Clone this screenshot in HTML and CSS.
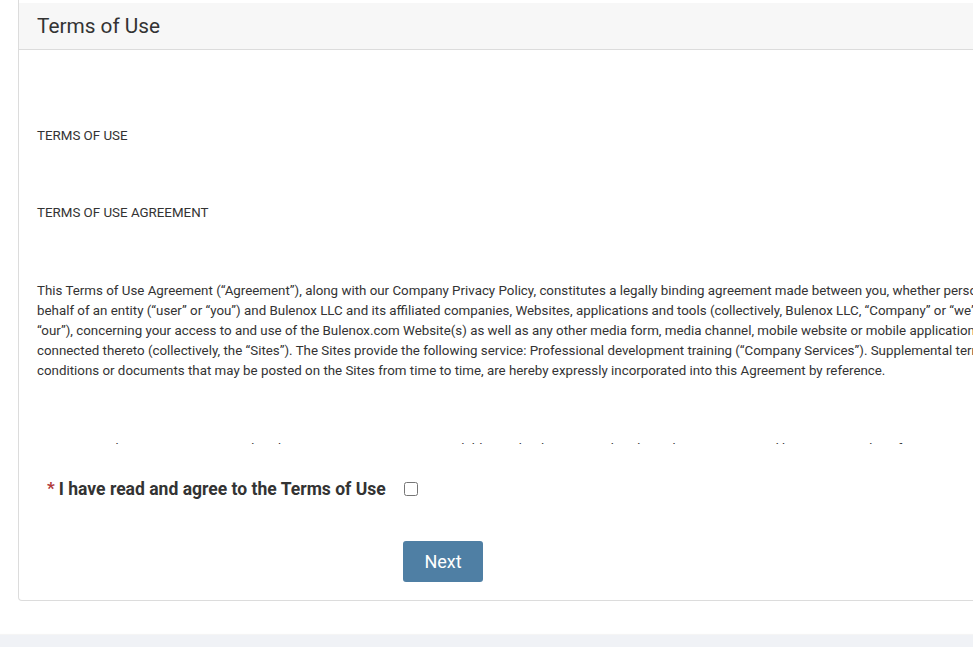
FILE: index.html
```html
<!DOCTYPE html>
<html>
<head>
<meta charset="utf-8">
<link rel="stylesheet" href="styles.css">
</head>
<body>
<div class="page">
  <div class="card">
    <div class="card-header">
      <h2 class="card-title">Terms of Use</h2>
    </div>
    <div class="doc">
      <p>TERMS OF USE</p>
      <p>TERMS OF USE AGREEMENT</p>
      <p>This Terms of Use Agreement (“Agreement”), along with our Company Privacy Policy, constitutes a legally binding agreement made between you, whether personally or on<br>behalf of an entity (“user” or “you”) and Bulenox LLC and its affiliated companies, Websites, applications and tools (collectively, Bulenox LLC, “Company” or “we”, “us”, or<br>“our”), concerning your access to and use of the Bulenox.com Website(s) as well as any other media form, media channel, mobile website or mobile application related, linked, or otherwise<br>connected thereto (collectively, the “Sites”). The Sites provide the following service: Professional development training (“Company Services”). Supplemental terms and<br>conditions or documents that may be posted on the Sites from time to time, are hereby expressly incorporated into this Agreement by reference.</p>
      <p>Company makes no representation that the Sites are appropriate or available in other locations other than where it is operated by Company. The information provided on the Sites is not intended</p>
    </div>
    <div class="agree-row">
      <span class="req">*</span>
      <label class="agree-label" for="agree">I have read and agree to the Terms of Use</label>
      <input class="agree-box" type="checkbox" id="agree">
    </div>
    <div class="actions">
      <button class="btn-next" type="button">Next</button>
    </div>
  </div>
  <div class="footer"></div>
</div>
</body>
</html>
```

FILE: styles.css
```css
html, body {
  margin: 0;
  padding: 0;
  background: #fff;
  overflow: hidden;
}
body {
  font-family: Roboto, "Liberation Sans", Arial, sans-serif;
  color: #333;
  width: 973px;
  height: 647px;
}
.page {
  display: flex;
  flex-direction: column;
  height: 647px;
}
.card {
  margin-left: 18px;
  width: 1200px;
  border: 1px solid #dcdcdc;
  border-top: 0;
  border-radius: 0 0 4px 4px;
  padding-top: 3px;
  background: #fff;
  flex: none;
}
.card-header {
  background: #f7f7f7;
  border-bottom: 1px solid #dcdcdc;
  height: 46px;
  display: flex;
  align-items: center;
  padding-left: 18px;
}
.card-title {
  margin: 0;
  font-weight: 400;
  font-size: 20.8px;
  color: #333;
  padding-bottom: 1px;
}
.doc {
  height: 394px;
  overflow: hidden;
  padding: 76px 18px 0;
  box-sizing: border-box;
  font-size: 13.333px;
  line-height: 20px;
  color: #333;
}
.doc p {
  margin: 0 0 58px;
  white-space: nowrap;
}
.doc p:first-child {
  margin-bottom: 57px;
}
.agree-row {
  display: flex;
  align-items: center;
  padding: 33px 0 0 28px;
  height: 24px;
}
.req {
  color: #b03a3a;
  font-size: 17px;
  font-weight: 700;
  margin-right: 4px;
  position: relative;
  top: -1px;
}
.agree-label {
  font-size: 17.55px;
  font-weight: 700;
  color: #333;
}
.agree-box {
  width: 14px;
  height: 14px;
  margin: 0 0 0 18px;
}
.actions {
  padding: 40px 0 18px 384px;
}
.btn-next {
  width: 80px;
  height: 41px;
  border: 0;
  border-radius: 3px;
  background: #4f7fa4;
  color: #fff;
  font-family: Roboto, "Liberation Sans", Arial, sans-serif;
  font-size: 18px;
  padding: 0;
}
.footer {
  margin-top: auto;
  height: 12px;
  background: #f0f2f6;
  box-shadow: 0 -1px 1px rgba(0,0,0,0.04);
}
```
